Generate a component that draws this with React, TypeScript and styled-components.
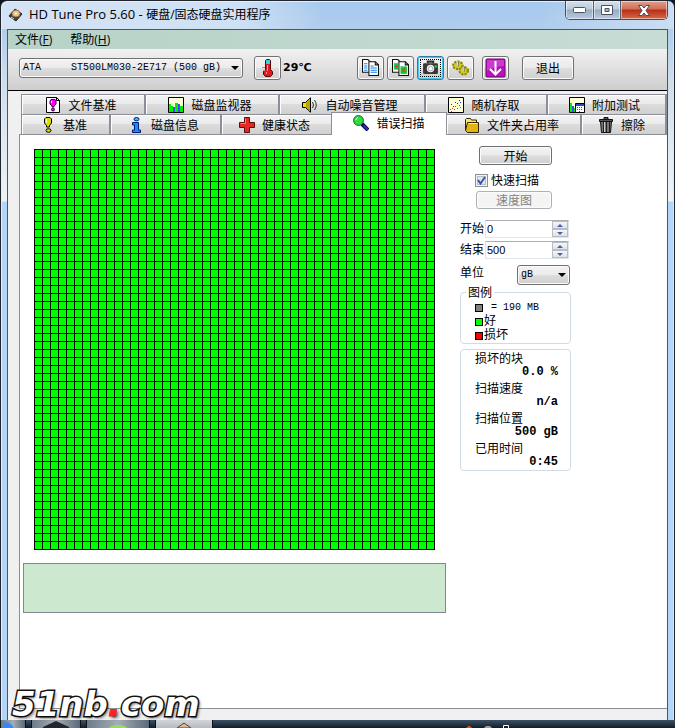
import React, { useId, useState } from "react";
import styled, { createGlobalStyle, css } from "styled-components";

const ui = `"Open Sans", "Noto Sans CJK SC", sans-serif`;
const cjk = `"Noto Sans CJK SC", sans-serif`;
const mono = `"Liberation Mono", "Noto Sans CJK SC", monospace`;

const GlobalStyle = createGlobalStyle`
  * { box-sizing: border-box; }
  body { margin: 0; background: #10151d; color: #000; font: 12px/14px ${cjk}; }
  button, input, select { font: inherit; color: inherit; margin: 0; }
`;

const Desktop = styled.div`
  position: relative;
  min-height: 100vh;
  display: flex;
  flex-direction: column;
`;

const Window = styled.main`
  flex: 1;
  display: flex;
  flex-direction: column;
  padding: 0 6px;
  border: solid #20252e;
  border-width: 1px 1px 0;
  border-radius: 7px 7px 0 0;
  box-shadow: inset 1px 1px 0 #d9f3fb, inset -1px 0 0 #c9edfa;
  background:
    linear-gradient(90deg, rgba(216, 230, 246, 0.9) 0, rgba(216, 230, 246, 0.8) 35%, rgba(160, 197, 238, 0) 48%, rgba(160, 197, 238, 0) 80%, rgba(206, 224, 243, 0.9)) 0 0 / 100% 28px no-repeat,
    linear-gradient(#a6c9ee, #b0cdec 28px, #cfdeec 80px, #eef3f8 200px, #b3d5f8 201px, #b3d5f8);
`;

const TitleBar = styled.header`
  display: flex;
  align-items: flex-start;
  height: 28px;
`;

const Title = styled.h1`
  flex: 1;
  display: flex;
  align-items: center;
  gap: 6px;
  margin: 0;
  padding-left: 1px;
  height: 27px;
  font: 12px/16px ${ui};
`;

const ProductName = styled.span`
  font-size: 13px;
`;

const Captions = styled.div`
  display: flex;
  border: 1px solid #454f5c;
  border-top: 0;
  border-radius: 0 0 5px 5px;
  overflow: hidden;
`;

const CaptionButton = styled.button<{ $close?: boolean }>`
  display: flex;
  align-items: center;
  justify-content: center;
  width: ${(p) => (p.$close ? 47 : 27)}px;
  height: 18px;
  padding: 0;
  border: 0;
  border-left: 1px solid #56606e;
  box-shadow: inset 0 0 0 1px rgba(255, 255, 255, 0.5);
  background: ${(p) =>
    p.$close
      ? "linear-gradient(#e0a090, #cf6d57 45%, #b92d12 50%, #d36a4a)"
      : "linear-gradient(#d5e0ec, #bccada 45%, #98abc1 50%, #b8cbe0)"};
  &:first-child { border-left: 0; }
`;

const Client = styled.div`
  flex: 1;
  display: flex;
  flex-direction: column;
  border: solid #4c5563;
  border-width: 1px 1px 0;
  background: #f0f0f0;
`;

const MenuBar = styled.nav`
  display: flex;
  gap: 18px;
  height: 19px;
  padding-left: 7px;
  background: linear-gradient(90deg, #b7d2c7, #c7dcd5);
`;

const MenuItem = styled.button`
  padding: 0;
  border: 0;
  background: none;
  font: 12px/20px ${ui};
`;

const Toolbar = styled.div`
  display: flex;
  align-items: center;
  height: 42px;
  padding: 0 11px 4px;
  border-bottom: 1px solid #000;
  background: linear-gradient(#f1f1f1, #cecece);
`;

const buttonFace = css`
  border: 1px solid #707070;
  border-radius: 3px;
  box-shadow: inset 0 0 0 1px #fbfbfb;
  background: linear-gradient(#f3f3f3, #ebebeb 48%, #dddddd 52%, #cfcfcf);
`;

const SelectFrame = styled.span<{ $width: number }>`
  display: grid;
  align-items: center;
  width: ${(p) => p.$width}px;
  height: 20px;
  > * { grid-area: 1 / 1; }
  > svg { justify-self: end; margin-right: 4px; pointer-events: none; }
`;

const Select = styled.select`
  ${buttonFace}
  appearance: none;
  width: 100%;
  height: 20px;
  padding: 0 16px 0 3px;
  font: 10px/18px ${mono};
`;

const ToolButton = styled.button<{ $active?: boolean }>`
  ${buttonFace}
  display: flex;
  align-items: center;
  justify-content: center;
  width: 27px;
  height: 24px;
  padding: 0;
  ${(p) =>
    p.$active &&
    css`
      border-color: #2a7ea8;
      box-shadow: inset 0 0 0 1px #49c3ec;
      outline: 1px dotted #000;
      outline-offset: -4px;
    `}
`;

const ThermoGroup = styled.div`
  display: flex;
  align-items: center;
  margin-left: 11px;
`;

const Temperature = styled.output`
  width: 76px;
  padding: 0 2px;
  font: bold 11px/14px "DejaVu Sans", "Noto Sans CJK SC", sans-serif;
`;

const ToolGroup = styled.div`
  display: flex;
  gap: 3px;
  margin-right: 8px;
`;

const PushButton = styled.button<{ $width: number; $height: number }>`
  ${buttonFace}
  width: ${(p) => p.$width}px;
  height: ${(p) => p.$height}px;
  padding: 0;
  line-height: 14px;
  &:disabled {
    color: #838383;
    border-color: #adb2b5;
    background: #f4f4f4;
  }
`;

const ExitButton = styled(PushButton)`
  margin-left: 5px;
`;

const Tabs = styled.div`
  padding: 3px 0 0 13px;
`;

const TabRow = styled.div<{ $columns: string }>`
  display: grid;
  grid-template-columns: ${(p) => p.$columns};
  height: 20px;
  border-left: 1px solid #8c8e98;
`;

const Tab = styled.button`
  min-width: 0;
  display: flex;
  align-items: center;
  justify-content: center;
  gap: 7px;
  height: 20px;
  padding: 0 4px 0 0;
  border: solid #8c8e98;
  border-width: 1px 2px 0 0;
  box-shadow: inset 1px 1px 0 #fff;
  background: linear-gradient(#f3f3f3, #ebebeb 45%, #dcdcdc 50%, #d0d0d0);
  line-height: 16px;
  white-space: nowrap;
  > svg { flex: none; }
  &[aria-selected="true"] {
    position: relative;
    height: 23px;
    margin: -2px 0 -1px -2px;
    padding: 0 0 3px;
    border-width: 1px 1px 0;
    background: #fff;
  }
`;

const Pane = styled.section`
  flex: 1;
  display: flex;
  gap: 14px;
  margin: 0 0 11px 11px;
  padding-left: 3px;
  border: solid #8c8e98;
  border-width: 1px 0 1px 1px;
  background: #fff;
`;

const Results = styled.div`
  display: flex;
  flex-direction: column;
  gap: 13px;
  padding-top: 14px;
  > svg { align-self: center; display: block; }
`;

const Message = styled.div`
  width: 423px;
  height: 50px;
  border: 1px solid #82868f;
  background: #cce8cf;
`;

const Options = styled.aside`
  display: flex;
  flex-direction: column;
  width: 111px;
  padding-top: 11px;
`;

const Actions = styled.div`
  display: flex;
  flex-direction: column;
  align-items: flex-end;
  padding-right: 19px;
  margin-bottom: 11px;
`;

const CheckLabel = styled.label`
  display: flex;
  align-items: center;
  gap: 3px;
  margin: 7px 13px 3px 0;
  height: 16px;
`;

const CheckFrame = styled.span`
  display: grid;
  place-items: center;
  > * { grid-area: 1 / 1; }
  > svg { pointer-events: none; }
`;

const Checkbox = styled.input`
  appearance: none;
  width: 13px;
  height: 13px;
  border: 1px solid #8e8f8f;
  box-shadow: inset 0 0 0 1px #f4f4f4, inset 0 0 0 2px #b7bdc6;
  background: #e3e7ec;
  &:not(:checked) + svg { display: none; }
`;

const Field = styled.div`
  display: flex;
  justify-content: space-between;
  margin: 0 2px 3px 0;
  line-height: 16px;
`;

const Spin = styled.span`
  display: flex;
  width: 84px;
  height: 18px;
  border: 1px solid #dfe5ec;
  border-top-color: #abadb3;
`;

const SpinInput = styled.input`
  flex: 1;
  min-width: 0;
  padding: 0 0 0 1px;
  border: 0;
  background: none;
  font: 11px/16px "Liberation Sans", sans-serif;
`;

const SpinButtons = styled.span`
  display: flex;
  flex-direction: column;
  width: 16px;
`;

const SpinButton = styled.button`
  flex: 1;
  display: flex;
  align-items: center;
  justify-content: center;
  padding: 0;
  border: 1px solid #b8bcc4;
  background: linear-gradient(#f5f6f8, #dfe2e7);
`;

const UnitField = styled.label`
  display: flex;
  justify-content: space-between;
  margin: 3px 1px 0 0;
  line-height: 14px;
`;

const Legend = styled.fieldset`
  margin: 0;
  min-width: 0;
  padding: 2px 0 0 14px;
  border: 1px solid #d0dbe6;
  border-radius: 4px;
  > legend { margin-left: -9px; padding: 0 2px; line-height: 14px; }
`;

const Key = styled.div<{ $wide?: boolean }>`
  display: flex;
  align-items: center;
  gap: ${(p) => (p.$wide ? 8 : 1)}px;
  line-height: 14px;
  font-family: ${mono};
  font-size: ${(p) => (p.$wide ? 10 : 12)}px;
`;

const Swatch = styled.i<{ $color: string }>`
  width: 8px;
  height: 8px;
  border: 1px solid #000;
  background: ${(p) => p.$color};
`;

const Stats = styled.dl`
  margin: 5px 0 0;
  padding: 0 12px 0 14px;
  border: 1px solid #d0dbe6;
  border-radius: 4px;
  line-height: 15px;
`;

const StatValue = styled.dd`
  margin: 0;
  text-align: right;
  font: bold 12px/15px ${mono};
`;

const Taskbar = styled.footer`
  display: flex;
  align-items: flex-end;
  gap: 5px;
  height: 8px;
  background: linear-gradient(#3d5266, #131c28);
`;

const TaskSlot = styled.div<{ $width: number; $light?: boolean }>`
  display: flex;
  justify-content: center;
  width: ${(p) => p.$width}px;
  height: 8px;
  border: solid #0b1119;
  border-width: 0 1px;
  background: ${(p) =>
    p.$light ? "linear-gradient(#d2d5d9, #b6bbc1)" : "linear-gradient(90deg, #6c7b8a, #a5adb6 50%, #5c6978)"};
`;

const Tray = styled.div`
  margin-left: auto;
  margin-right: 166px;
  height: 3px;
  display: flex;
`;

const Watermark = styled.div`
  position: absolute;
  left: 12px;
  bottom: 4px;
  font: italic bold 34px/40px "DejaVu Sans", sans-serif;
  color: #fff;
  -webkit-text-stroke: 3px #151515;
  paint-order: stroke fill;
  text-shadow: 2px 2px 3px rgba(0, 0, 0, 0.6);
  pointer-events: none;
  > span { color: #f22; -webkit-text-stroke: 1px #f22; }
`;

const Icon = ({ children, size = 16 }: { children: React.ReactNode; size?: number }) => (
  <svg width={size} height={size} viewBox="0 0 16 16" aria-hidden="true">{children}</svg>
);

const Arrow = ({ up, color = "#000", w = 8 }: { up?: boolean; color?: string; w?: number }) => (
  <svg width={w} height={w / 2} viewBox="0 0 8 4" aria-hidden="true">
    <path d={up ? "M0 4L4 0L8 4Z" : "M0 0H8L4 4Z"} fill={color} />
  </svg>
);

const icons = {
  fileBench: (
    <Icon>
      <path d="M1.500.5h10l3 3v12h-13z" fill="#fff" stroke="#000" />
      <path d="M11.500.5v3h3" fill="none" stroke="#000" />
      <path d="M6 2.500h4l1 1.500v3L9 9v1H7V9L5 7V4z" fill="#f0f" stroke="#404" />
      <path d="M6.500 4v2" stroke="#fff" />
      <circle cx="8" cy="12.500" r="1.500" fill="#f0f" stroke="#404" />
    </Icon>
  ),
  monitor: (
    <Icon>
      <path d="M.5.5h15v15H.5z" fill="#ffffd8" stroke="#000" />
      <path d="M1 7h2v8H1zM3 9h2v6H3zM7 6h3v9H7zM12 9h3v6h-3z" fill="#0e0" />
      <path d="M5 10h2v5H5zM10 7h2v8h-2z" fill="#44f" />
    </Icon>
  ),
  sound: (
    <Icon>
      <path d="M.5 5.500h3L8.500.8v14.400L3.500 10.500h-3z" fill="#f4e000" stroke="#000" />
      <path d="M5 5v6M7 3v10" stroke="#806c00" />
      <path d="M10.500 5q2 3 0 6M12.500 3q3.500 5 0 10" fill="none" stroke="#333" />
    </Icon>
  ),
  random: (
    <Icon>
      <path d="M.5.5h15v15H.5z" fill="#ffffd8" stroke="#000" />
      <path d="M3 7h1v1H3zM5 9h1v1H5zM7 5h1v1H7zM9 6h1v1H9zM11 3h1v1h-1zM12 5h1v1h-1z" fill="#22f" />
      <path d="M2 12h1v1H2zM4 11h1v1H4zM6 12h1v1H6zM7 9h1v1H7zM9 11h1v1H9zM11 8h1v1h-1zM12 10h1v1h-1zM3 14h1v1H3z" fill="#f22" />
    </Icon>
  ),
  extra: (
    <Icon>
      <path d="M.5.5h15v15H.5z" fill="#ffffd8" stroke="#000" />
      <path d="M1 6h2v9H1zM5 11h2v4H5z" fill="#0e0" />
      <path d="M3 9h2v6H3z" fill="#44f" />
      <path d="M6.500 6.500h9v9h-9z" fill="#fff" stroke="#000" />
      <path d="M7 7h8v2H7z" fill="#224ad8" />
      <path d="M8 10h1v1H8zM10 10h1v1h-1zM12 10h1v1h-1zM8 12h1v1H8zM10 12h1v1h-1zM12 12h1v1h-1zM10 14h1v1h-1z" fill="#e22" />
    </Icon>
  ),
  bench: (
    <Icon>
      <path d="M6 .5h4l1.500 1.500v4L9.500 8.500v1.500h-3V8.500L4.500 6V2z" fill="#dede00" stroke="#000" />
      <path d="M6.500 2v4" stroke="#ffffb0" />
      <ellipse cx="8.500" cy="13.500" rx="2.500" ry="1.800" fill="#dede00" stroke="#000" />
    </Icon>
  ),
  info: (
    <Icon>
      <path d="M4.500 5.500h6v7.500h2v2.500h-8V13h2V8h-2z" fill="#168cf4" stroke="#001c70" />
      <ellipse cx="8.500" cy="2.200" rx="2.500" ry="1.700" fill="#2ac5f2" stroke="#001c70" />
    </Icon>
  ),
  health: (
    <Icon>
      <path d="M5.500.5h5v5h5v5h-5v5h-5v-5h-5v-5h5z" fill="#e22a22" stroke="#501010" />
      <path d="M6.500 1.500v5h-5" fill="none" stroke="#ff8078" />
    </Icon>
  ),
  scan: (
    <Icon>
      <path d="M9 9l6 6" stroke="#000040" strokeWidth="4" />
      <path d="M10 10l4.500 4.500" stroke="#2436d8" strokeWidth="2" />
      <circle cx="5.500" cy="5.500" r="4.900" fill="#2ddd42" stroke="#146020" />
      <path d="M3 5q0-2 2-2.500" stroke="#d8ffd8" fill="none" />
    </Icon>
  ),
  folder: (
    <Icon>
      <path d="M1.500 13V2.500l1-1h4l1 1.500h5v2" fill="#f8e670" stroke="#322400" />
      <path d="M3.500 5.500h11v10h-11l-2-2z" fill="#e2b414" stroke="#322400" />
      <path d="M4.500 6.500h9" stroke="#fff0a0" />
    </Icon>
  ),
  trash: (
    <Icon>
      <path d="M2.500 4.500h11l-1 11h-9z" fill="#777" stroke="#111" />
      <path d="M5.500 5v10M8.500 5v10M11.500 5v10" stroke="#222" />
      <path d="M6.500 5v10" stroke="#ccc" />
      <path d="M1.500 2.500h13v2h-13zM6 2.500v-2h4v2" fill="#555" stroke="#111" />
    </Icon>
  ),
};

const Pages = ({ picture }: { picture?: boolean }) => (
  <Icon size={17}>
    <path d="M.5.5h5l3 3v9h-8z" fill="#fff" stroke="#111" />
    <path d="M6.500 2.500h6l3 3v10h-9z" fill="#fff" stroke="#111" />
    <path d="M12.500 2.500v3h3" fill="none" stroke="#111" />
    {picture ? (
      <>
        <path d="M2 4h4v6H2z" fill="#12c52b" />
        <path d="M8 7h6v7H8z" fill="#12c52b" />
        <path d="M3 6h2v2H3zM10 9h2v3h-2z" fill="#f13a20" />
        <path d="M2 4h3v1H2zM8 7h3v1H8z" fill="#22c8f4" />
      </>
    ) : (
      <path d="M2 4.500h3M2 6.500h3M2 8.500h3M2 10.500h3M8 6.500h3M8 8.500h6M8 10.500h6M8 12.500h6" stroke="#1580f0" />
    )}
  </Icon>
);

const Camera = () => (
  <Icon size={17}>
    <path d="M5.500 4V2.500h5V4" fill="none" stroke="#333" strokeWidth="2" />
    <rect x="1" y="4" width="14" height="10" rx="1" fill="#383838" />
    <circle cx="8" cy="9" r="3.500" fill="#eee" />
    <circle cx="8" cy="9" r="2" fill="#fff" stroke="#bbb" />
    <path d="M12 6h2v2h-2z" fill="#1be03c" />
  </Icon>
);

const Gears = () => (
  <Icon size={17}>
    <ellipse cx="5.500" cy="6" rx="4.500" ry="3.500" fill="#d7cf13" stroke="#8c8600" strokeDasharray="2 1" strokeWidth="2" />
    <ellipse cx="11" cy="11" rx="4" ry="3.500" fill="#d7cf13" stroke="#8c8600" strokeDasharray="2 1" strokeWidth="2" />
    <path d="M5.500 2v5M11 7v5" stroke="#777" strokeWidth="2" />
    <path d="M5 2v5M10.500 7v5" stroke="#eee" />
  </Icon>
);

const Download = () => (
  <svg width="21" height="20" viewBox="0 0 21 20" aria-hidden="true">
    <rect x="1" y="1" width="19" height="18" rx="1" fill="#b711b8" stroke="#6e0872" />
    <path d="M2 2h17v6q-9 0-17 5z" fill="#d65ad8" opacity=".6" />
    <path d="M10.500 3v13M5 11l5.500 5.500L16 11" fill="none" stroke="#fff" strokeWidth="2" />
  </svg>
);

const Thermometer = () => (
  <svg width="12" height="18" viewBox="0 0 12 18" aria-hidden="true">
    <path d="M3.500 1.500l1-1h3l1 1v9l2 2v3l-2 2h-5l-2-2v-3l2-2z" fill="#df1920" stroke="#520808" />
    <path d="M4 1h4v4H4z" fill="#38d2dc" />
    <path d="M5.500 6v6M4.500 13v2" stroke="#ff9a98" />
    <path d="M0 8.500h3M1 11.500h2" stroke="#999" />
  </svg>
);

const AppIcon = () => (
  <svg width="15" height="14" viewBox="0 0 15 14" aria-hidden="true">
    <path d="M1 8L7 1l7 5-6 7z" fill="#44403c" stroke="#222" />
    <ellipse cx="8" cy="5.500" rx="4" ry="3.500" fill="#e8c48c" stroke="#987040" />
    <circle cx="8" cy="5.500" r="1" fill="#fff" />
    <path d="M3 9l3 2" stroke="#ddd" />
  </svg>
);

const CELL = 8;
const COUNT = 50;

function BlockMap() {
  const id = useId();
  const side = CELL * COUNT + 1;
  return (
    <svg width={side} height={side} role="img" aria-label="错误扫描">
      <defs>
        <pattern id={id} width={CELL} height={CELL} patternUnits="userSpaceOnUse">
          <rect width={CELL} height={CELL} fill="#000" />
          <rect x="1" y="1" width={CELL - 1} height={CELL - 1} fill="#0f0" />
        </pattern>
      </defs>
      <rect width={side} height={side} fill={`url(#${id})`} />
    </svg>
  );
}

type TabItem = { icon: keyof typeof icons; label: string; share: number };

const rows: TabItem[][] = [
  [
    { icon: "fileBench", label: "文件基准", share: 124 },
    { icon: "monitor", label: "磁盘监视器", share: 134 },
    { icon: "sound", label: "自动噪音管理", share: 146 },
    { icon: "random", label: "随机存取", share: 122 },
    { icon: "extra", label: "附加测试", share: 119 },
  ],
  [
    { icon: "bench", label: "基准", share: 89 },
    { icon: "info", label: "磁盘信息", share: 111 },
    { icon: "health", label: "健康状态", share: 111 },
    { icon: "scan", label: "错误扫描", share: 114 },
    { icon: "folder", label: "文件夹占用率", share: 135 },
    { icon: "trash", label: "擦除", share: 85 },
  ],
];

const stats = [
  ["损坏的块", "0.0 %"],
  ["扫描速度", "n/a"],
  ["扫描位置", "500 gB"],
  ["已用时间", "0:45"],
];

function SpinField({ label, initial }: { label: string; initial: string }) {
  const id = useId();
  const [value, setValue] = useState(initial);
  const step = (d: number) => setValue((v) => String(Math.max(0, Number(v) + d)));
  return (
    <Field>
      <label htmlFor={id}>{label}</label>
      <Spin>
        <SpinInput id={id} value={value} onChange={(e) => setValue(e.target.value)} />
        <SpinButtons>
          <SpinButton aria-label={`${label} +`} onClick={() => step(1)}><Arrow up color="#4660a8" w={6} /></SpinButton>
          <SpinButton aria-label={`${label} -`} onClick={() => step(-1)}><Arrow color="#4660a8" w={6} /></SpinButton>
        </SpinButtons>
      </Spin>
    </Field>
  );
}

export default function App() {
  const [tab, setTab] = useState("错误扫描");
  return (
    <Desktop>
      <GlobalStyle />
      <Window>
        <TitleBar>
          <Title>
            <AppIcon />
            <span><ProductName>HD Tune Pro 5.60 - </ProductName>硬盘/固态硬盘实用程序</span>
          </Title>
          <Captions>
            <CaptionButton aria-label="最小化">
              <svg width="13" height="6"><rect x=".5" y=".5" width="12" height="5" rx="1" fill="#fff" stroke="#4b5363" /></svg>
            </CaptionButton>
            <CaptionButton aria-label="最大化">
              <svg width="12" height="10"><path d="M.5.5h11v9H.5zM4 3.500h4v3H4z" fill="#fff" fillRule="evenodd" stroke="#4b5363" /></svg>
            </CaptionButton>
            <CaptionButton $close aria-label="关闭">
              <svg width="12" height="11" viewBox="0 0 12 11"><path d="M.5.5h3.500l2 2.500L8 .5h3.500L8 5.500l3.500 5H8L6 8l-2 2.500H.5L4 5.500z" fill="#fff" stroke="#4b4a5c" /></svg>
            </CaptionButton>
          </Captions>
        </TitleBar>
        <Client>
          <MenuBar>
            <MenuItem>文件(<u>F</u>)</MenuItem>
            <MenuItem>帮助(<u>H</u>)</MenuItem>
          </MenuBar>
          <Toolbar>
            <SelectFrame $width={224}>
              <Select aria-label="磁盘">
                <option>{"ATA\u00a0\u00a0\u00a0\u00a0\u00a0ST500LM030-2E717 (500 gB)"}</option>
              </Select>
              <Arrow />
            </SelectFrame>
            <ThermoGroup>
              <ToolButton aria-label="温度"><Thermometer /></ToolButton>
              <Temperature>29℃</Temperature>
            </ThermoGroup>
            <ToolGroup>
              <ToolButton aria-label="复制文本"><Pages /></ToolButton>
              <ToolButton aria-label="复制图片"><Pages picture /></ToolButton>
              <ToolButton aria-label="截图" $active><Camera /></ToolButton>
              <ToolButton aria-label="选项"><Gears /></ToolButton>
            </ToolGroup>
            <ToolGroup>
              <ToolButton aria-label="保存"><Download /></ToolButton>
            </ToolGroup>
            <ExitButton $width={52} $height={24}>退出</ExitButton>
          </Toolbar>
          <Tabs role="tablist">
            {rows.map((row, i) => (
              <TabRow key={i} $columns={row.map((t) => `${t.share}fr`).join(" ")}>
                {row.map((t) => (
                  <Tab
                    key={t.label}
                    role="tab"
                    aria-selected={t.label === tab}
                    onClick={() => setTab(t.label)}
                  >
                    {icons[t.icon]}
                    {t.label}
                  </Tab>
                ))}
              </TabRow>
            ))}
          </Tabs>
          <Pane role="tabpanel">
            <Results>
              <BlockMap />
              <Message />
            </Results>
            <Options>
              <Actions>
                <PushButton $width={73} $height={19}>开始</PushButton>
                <CheckLabel>
                  <CheckFrame>
                    <Checkbox type="checkbox" defaultChecked />
                    <svg width="9" height="9" viewBox="0 0 9 9"><path d="M1 4l2.500 3.500L8 1" fill="none" stroke="#3a55b0" strokeWidth="2" /></svg>
                  </CheckFrame>
                  快速扫描
                </CheckLabel>
                <PushButton $width={76} $height={18} disabled>速度图</PushButton>
              </Actions>
              <SpinField label="开始" initial="0" />
              <SpinField label="结束" initial="500" />
              <UnitField>
                单位
                <SelectFrame $width={53}>
                  <Select><option>gB</option></Select>
                  <Arrow />
                </SelectFrame>
              </UnitField>
              <Legend>
                <legend>图例</legend>
                <Key $wide><Swatch $color="#808080" />= 190 MB</Key>
                <Key><Swatch $color="#0f0" />好</Key>
                <Key><Swatch $color="#f00" />损坏</Key>
              </Legend>
              <Stats>
                {stats.map(([name, value]) => (
                  <React.Fragment key={name}>
                    <dt>{name}</dt>
                    <StatValue>{value}</StatValue>
                  </React.Fragment>
                ))}
              </Stats>
            </Options>
          </Pane>
        </Client>
      </Window>
      <Taskbar>
        <TaskSlot $width={26}><svg width="20" height="8"><circle cx="2" cy="11" r="9" fill="#3d86f2" /></svg></TaskSlot>
        <TaskSlot $width={50}><svg width="26" height="8"><path d="M0 7L13 1l13 6v1H0z" fill="#24262d" /></svg></TaskSlot>
        <TaskSlot $width={64}><svg width="20" height="8"><ellipse cx="10" cy="10" rx="10" ry="5" fill="#92e05e" /></svg></TaskSlot>
        <TaskSlot $width={58} $light><svg width="16" height="8"><path d="M1 8l7-5 7 5z" fill="#e6b58a" stroke="#444" /></svg></TaskSlot>
        <Tray>
          <svg width="43" height="3">
            <path d="M0 3l2-2h2l2 2z" fill="#d5512e" />
            <path d="M18 3l2-2h4l2 2z" fill="#9aa0a6" />
            <path d="M37.500 3V.5h5V3" fill="none" stroke="#fff" />
          </svg>
        </Tray>
      </Taskbar>
      <Watermark>51nb<span>.</span>com</Watermark>
    </Desktop>
  );
}
